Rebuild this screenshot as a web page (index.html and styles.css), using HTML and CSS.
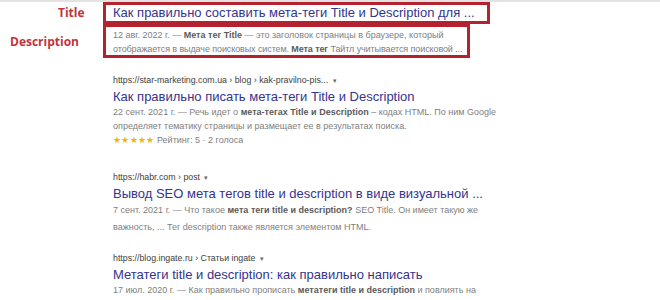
FILE: index.html
```html
<!DOCTYPE html>
<html lang="ru">
<head>
<meta charset="utf-8">
<link rel="stylesheet" href="styles.css">
</head>
<body>
<div class="page">
  <div class="annot-row">
    <div class="label label-title">Title</div>
    <div class="box box-title"><span class="title">Как правильно составить мета-теги Title и Description для ...</span></div>
  </div>
  <div class="annot-row">
    <div class="label label-desc">Description</div>
    <div class="box box-desc">
      <span class="desc-line">12 авг. 2022 г. — <b>Мета тег Title</b> — это заголовок страницы в браузере, который</span>
      <span class="desc-line tight">отображается в выдаче поисковых систем. <b>Мета тег</b> Тайтл учитывается поисковой ...</span>
    </div>
  </div>

  <div class="results">
    <div class="result r2">
      <div class="url">https://star-marketing.com.ua › blog › kak-pravilno-pis... <span class="caret">▾</span></div>
      <div class="title">Как правильно писать мета-теги Title и Description</div>
      <div class="desc">
        <span class="desc-line">22 сент. 2021 г. — Речь идет о <b>мета-тегах Title и Description</b> – кодах HTML. По ним Google</span>
        <span class="desc-line">определяет тематику страницы и размещает ее в результатах поиска.</span>
      </div>
      <div class="rating"><span class="stars">★★★★★</span> Рейтинг: 5 · 2 голоса</div>
    </div>

    <div class="result r3">
      <div class="url">https://habr.com › post <span class="caret">▾</span></div>
      <div class="title">Вывод SEO мета тегов title и description в виде визуальной ...</div>
      <div class="desc">
        <span class="desc-line">7 сент. 2021 г. — Что такое <b>мета теги title и description?</b> SEO Title. Он имеет такую же</span>
        <span class="desc-line">важность, ... Тег description также является элементом HTML.</span>
      </div>
    </div>

    <div class="result r4">
      <div class="url">https://blog.ingate.ru › Статьи ingate <span class="caret">▾</span></div>
      <div class="title">Метатеги title и description: как правильно написать</div>
      <div class="desc">
        <span class="desc-line">17 июл. 2020 г. — Как правильно прописать <b>метатеги title и description</b> и повлиять на</span>
      </div>
    </div>
  </div>
</div>
</body>
</html>
```

FILE: styles.css
```css
html, body {
  margin: 0;
  padding: 0;
  background: #ffffff;
}

.page {
  width: 660px;
  height: 300px;
  overflow: hidden;
  border-top: 2px solid #e2e2e2;
  box-sizing: border-box;
  font-family: "Liberation Sans", Arial, sans-serif;
}

.annot-row {
  display: flex;
  align-items: center;
}

.label {
  width: 103px;
  box-sizing: border-box;
  font-family: "Open Sans", "Liberation Sans", sans-serif;
  font-weight: 700;
  font-size: 12px;
  color: #c1333d;
  line-height: 16px;
}

.label-title { padding-left: 58px; }
.label-desc { padding-left: 10px; padding-top: 2px; }

.box {
  border: 3px solid #b3222e;
  box-sizing: border-box;
  padding-left: 7px;
}

.box-title {
  width: 387px;
  height: 22px;
  display: flex;
  align-items: center;
}

.box-desc {
  width: 367px;
  height: 34px;
  padding-top: 1px;
  overflow: hidden;
}

.results {
  padding-left: 113px;
  padding-top: 16px;
}

.result { display: flex; flex-direction: column; }

.url {
  font-size: 8.8px;
  line-height: 12px;
  color: #404040;
}

.caret { color: #666; font-size: 7px; margin-left: 2px; }

.title {
  font-size: 13px;
  line-height: 16px;
  color: #34348e;
  white-space: nowrap;
}

.result .title { margin-top: 2px; }

.desc { margin-top: 0; }

.desc-line {
  display: block;
  font-size: 9px;
  line-height: 14px;
  color: #808080;
  white-space: nowrap;
}

.desc-line.tight { letter-spacing: -0.1px; }

.desc-line b { color: #5a5a5a; font-weight: 700; }

.rating {
  font-size: 9px;
  line-height: 14px;
  color: #808080;
}

.stars { color: #f4b400; letter-spacing: 0.3px; }

.r3 { margin-top: 24px; }
.r3 .desc-line { line-height: 17px; }
.r4 { margin-top: 16px; }
```
